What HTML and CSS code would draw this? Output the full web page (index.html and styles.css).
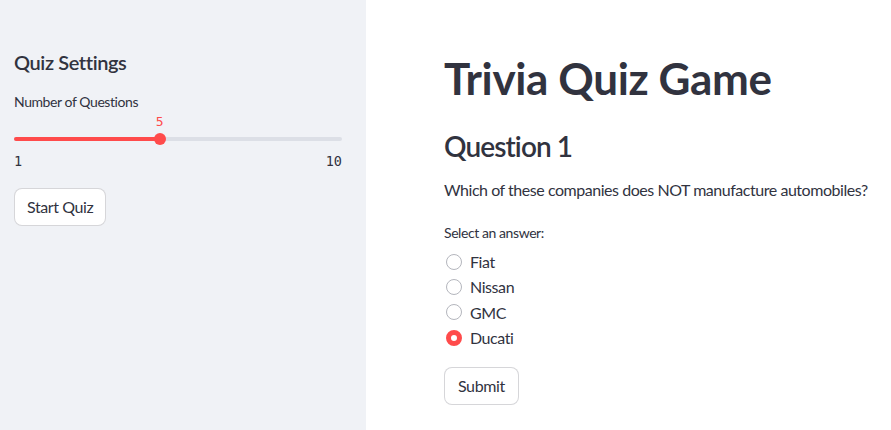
FILE: index.html
```html
<!DOCTYPE html>
<html>
<head>
<meta charset="utf-8">
<link rel="stylesheet" href="styles.css">
</head>
<body>
<div class="app">
  <aside class="sidebar">
    <h3 class="side-title">Quiz Settings</h3>
    <div class="field-label">Number of Questions</div>
    <div class="slider">
      <div class="slider-value-row"><span class="slider-value" style="left: 44.44%">5</span></div>
      <div class="track">
        <div class="track-fill" style="width: 44.44%"></div>
        <div class="thumb" style="left: 44.44%"></div>
      </div>
      <div class="ticks"><span>1</span><span>10</span></div>
    </div>
    <button class="btn">Start Quiz</button>
  </aside>
  <main class="main">
    <h1 class="title">Trivia Quiz Game</h1>
    <h2 class="question">Question 1</h2>
    <p class="question-text">Which of these companies does NOT manufacture automobiles?</p>
    <div class="field-label answer-label">Select an answer:</div>
    <div class="radios">
      <label class="radio"><span class="circle"></span><span>Fiat</span></label>
      <label class="radio"><span class="circle"></span><span>Nissan</span></label>
      <label class="radio"><span class="circle"></span><span>GMC</span></label>
      <label class="radio"><span class="circle checked"></span><span>Ducati</span></label>
    </div>
    <button class="btn submit">Submit</button>
  </main>
</div>
</body>
</html>
```

FILE: styles.css
```css
* { box-sizing: border-box; }
html, body { margin: 0; padding: 0; }
body {
  font-family: Lato, "Noto Sans", sans-serif;
  color: #31333f;
  background: #ffffff;
  width: 891px;
  height: 430px;
  overflow: hidden;
  letter-spacing: -0.42px;
}
.app {
  display: flex;
  height: 430px;
}
.sidebar {
  width: 366px;
  flex: none;
  background: #f0f2f6;
  padding: 50px 24px 0 14px;
  display: flex;
  flex-direction: column;
  align-items: flex-start;
}
.side-title {
  margin: 0;
  font-size: 20px;
  line-height: 24px;
  font-weight: 600;
  letter-spacing: -0.4px;
}
.field-label {
  font-size: 14px;
  line-height: 20px;
  margin-top: 18px;
}
.slider {
  width: 328px;
  margin-top: 2px;
  letter-spacing: 0;
}
.slider-value-row {
  position: relative;
  height: 16px;
}
.slider-value {
  position: absolute;
  top: 0;
  transform: translateX(-50%);
  font-family: "DejaVu Sans Mono", "Liberation Mono", monospace;
  font-size: 13px;
  line-height: 16px;
  color: #ff4b4b;
}
.track {
  position: relative;
  height: 18px;
}
.track::before {
  content: "";
  position: absolute;
  left: 0; right: 0;
  top: 7px;
  height: 4px;
  border-radius: 2px;
  background: #dcdfe6;
}
.track-fill {
  position: absolute;
  left: 0;
  top: 7px;
  height: 4px;
  border-radius: 2px;
  background: #ff4b4b;
}
.thumb {
  position: absolute;
  top: 3px;
  width: 12px;
  height: 12px;
  margin-left: -6px;
  border-radius: 50%;
  background: #ff4b4b;
}
.ticks {
  display: flex;
  justify-content: space-between;
  margin-top: 5px;
  font-family: "DejaVu Sans Mono", "Liberation Mono", monospace;
  font-size: 13.5px;
  line-height: 16px;
}
.btn {
  margin-top: 19px;
  height: 38px;
  padding: 0 12px;
  border: 1px solid rgba(49, 51, 63, 0.2);
  border-radius: 8px;
  background: #ffffff;
  color: #31333f;
  font-family: inherit;
  font-size: 16px;
  line-height: 24px;
  letter-spacing: -0.4px;
}
.main {
  flex: 1;
  padding: 52px 0 0 78px;
  display: flex;
  flex-direction: column;
  align-items: flex-start;
}
.title {
  margin: 0;
  font-size: 44px;
  line-height: 52px;
  font-weight: 700;
  letter-spacing: -0.38px;
}
.question {
  margin: 24px 0 0;
  font-size: 28px;
  line-height: 36px;
  font-weight: 600;
  letter-spacing: -0.9px;
}
.question-text {
  margin: 14px 0 0;
  font-size: 16px;
  line-height: 24px;
  white-space: nowrap;
  letter-spacing: -0.46px;
}
.answer-label {
  margin-top: 21px;
}
.radios {
  margin-top: 6px;
  display: flex;
  flex-direction: column;
}
.radio {
  display: flex;
  align-items: center;
  height: 25.3px;
  font-size: 16px;
  gap: 8px;
  padding-left: 2px;
}
.circle {
  width: 16px;
  height: 16px;
  border-radius: 50%;
  border: 1.5px solid #b4b6bd;
  background: #fff;
}
.circle.checked {
  border: 5px solid #ff4b4b;
  background: #fff;
}
.submit {
  margin-top: 17px;
  padding: 0 13px;
}
```
